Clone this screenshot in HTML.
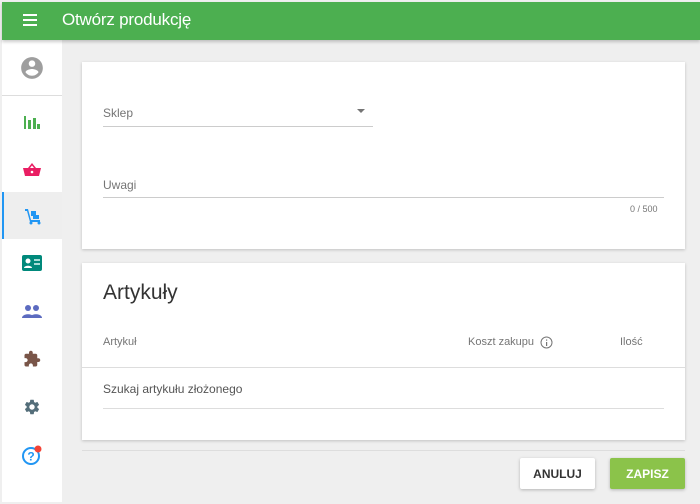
<!DOCTYPE html><html><head><style>
*{box-sizing:border-box;margin:0;padding:0}
body{width:700px;height:504px;background:#efefef;font-family:"Liberation Sans",sans-serif;position:relative;overflow:hidden}
.hdr{position:absolute;left:2px;top:2px;width:698px;height:38px;background:#4caf50;box-shadow:0 2px 3px rgba(0,0,0,.2);z-index:2}
.hdr .t{position:absolute;left:60px;top:8px;color:#fff;font-size:17px;letter-spacing:-0.2px}
.side{position:absolute;left:2px;top:40px;width:60px;height:462px;background:#fff}
.ic{position:absolute;left:0;width:60px;height:47px;display:flex;align-items:center;justify-content:center}
.card{position:absolute;left:82px;width:603px;background:#fff;box-shadow:0 1px 3px rgba(0,0,0,.2)}
.lbl{position:absolute;color:#757575;font-size:12px}
.line{position:absolute;height:1px;background:#ddd}
.btn{position:absolute;top:458px;height:31px;font-size:12px;font-weight:bold;display:flex;align-items:center;justify-content:center;box-shadow:0 1px 3px rgba(0,0,0,.25);border-radius:2px}
</style></head><body>
<div class="hdr"><svg style="position:absolute;left:21px;top:12px" width="14" height="12"><rect y="0" width="14" height="2" fill="#fff"/><rect y="5" width="14" height="2" fill="#fff"/><rect y="10" width="14" height="2" fill="#fff"/></svg><div class="t">Otwórz produkcję</div></div>
<div class="side">
<div class="ic" style="top:4px;height:48px"><svg width="26" height="26" viewBox="0 0 24 24"><path fill="#9e9e9e" d="M12 2C6.48 2 2 6.48 2 12s4.48 10 10 10 10-4.48 10-10S17.52 2 12 2zm0 3c1.66 0 3 1.340 3 3s-1.34 3-3 3-3-1.34-3-3 1.34-3 3-3zm0 14.2c-2.5 0-4.71-1.28-6-3.22.03-1.99 4-3.08 6-3.08 1.99 0 5.970 1.09 6 3.08-1.29 1.94-3.5 3.22-6 3.22z"/></svg></div>
<div style="position:absolute;left:0;top:55px;width:60px;height:1px;background:#ddd"></div>
<div class="ic" style="top:58px"><svg width="18" height="16"><g fill="#4caf50"><rect x="1" y="2" width="2" height="13"/><rect x="5" y="6" width="3" height="9"/><rect x="10" y="4" width="3" height="11"/><rect x="14" y="10" width="3" height="5"/></g></svg></div>
<div class="ic" style="top:105px"><svg width="18" height="16" viewBox="0 0 18 16"><path fill="#e91e63" d="M0 7h18l-2 8H2z M5 7l4-5 4 5h-2l-2-2.5L7 7z"/><circle cx="9" cy="11" r="1.3" fill="#fff"/></svg></div>
<div class="ic" style="top:152px;background:#eee;border-left:2px solid #2196f3"><svg width="18" height="18" viewBox="0 0 18 18"><g fill="#2196f3"><path d="M1 2h3l3 11h9v2H6L3 4H1z"/><rect x="7" y="4" width="5" height="5"/><rect x="9" y="8" width="6" height="4"/><circle cx="7" cy="16" r="1.5"/><circle cx="15" cy="16" r="1.5"/></g></svg></div>
<div class="ic" style="top:199px"><svg width="20" height="16"><rect width="20" height="16" rx="2" fill="#00897b"/><circle cx="6" cy="6" r="2.5" fill="#fff"/><path d="M2 13c0-3 8-3 8 0z" fill="#fff"/><rect x="12" y="4" width="6" height="2" fill="#a7dcd6"/><rect x="12" y="8" width="6" height="2" fill="#a7dcd6"/></svg></div>
<div class="ic" style="top:247px"><svg width="20" height="14"><g fill="#5c6bc0"><circle cx="6" cy="4" r="3"/><circle cx="14" cy="4" r="3"/><path d="M0 14c0-5 12-5 12 0z"/><path d="M8 14c0-5 12-5 12 0z"/></g></svg></div>
<div class="ic" style="top:295px"><svg width="18" height="18" viewBox="0 0 24 24"><path fill="#795548" d="M20.5 11H19V7c0-1.1-.9-2-2-2h-4V3.5C13 2.12 11.88 1 10.5 1S8 2.12 8 3.5V5H4c-1.1 0-2 .9-2 2v3.8h1.5c1.49 0 2.7 1.21 2.7 2.7s-1.21 2.7-2.7 2.7H2V20c0 1.1.9 2 2 2h3.8v-1.5c0-1.49 1.21-2.7 2.7-2.7 1.49 0 2.7 1.21 2.7 2.7V22H17c1.1 0 2-.9 2-2v-4h1.5c1.38 0 2.5-1.12 2.5-2.5S21.88 11 20.5 11z"/></svg></div>
<div class="ic" style="top:343px"><svg width="18" height="18" viewBox="0 0 24 24"><path fill="#546e7a" d="M19.14 12.94c.04-.3.06-.61.06-.94s-.02-.64-.07-.94l2.03-1.58a.49.49 0 00.12-.61l-1.92-3.32a.49.49 0 00-.59-.22l-2.39.96c-.5-.38-1.03-.7-1.62-.94l-.36-2.54a.48.48 0 00-.48-.41h-3.84c-.24 0-.43.17-.47.41l-.36 2.54c-.59.24-1.13.57-1.62.94l-2.39-.96a.49.49 0 00-.59.22L2.740 8.87c-.12.21-.08.47.12.61l2.03 1.58c-.05.3-.09.63-.09.94s.02.64.07.94l-2.03 1.58a.49.49 0 00-.12.61l1.92 3.32c.12.22.37.29.59.22l2.39-.96c.5.38 1.03.7 1.62.94l.36 2.54c.05.24.24.41.48.41h3.84c.24 0 .44-.17.47-.41l.36-2.54c.59-.24 1.13-.56 1.62-.94l2.39.96c.22.08.47 0 .59-.22l1.92-3.32c.12-.22.07-.47-.12-.61l-2.01-1.58zM12 15.6A3.6 3.6 0 1112 8.4a3.6 3.6 0 010 7.2z"/></svg></div>
<div class="ic" style="top:391px"><svg width="22" height="22" viewBox="0 0 22 22"><circle cx="10" cy="12" r="8" fill="none" stroke="#2196f3" stroke-width="2"/><text x="10" y="16.5" font-size="12" font-weight="bold" text-anchor="middle" fill="#2196f3" font-family="Liberation Sans">?</text><circle cx="17" cy="5" r="3.5" fill="#f44336"/></svg></div>
</div>
<div class="card" style="top:62px;height:187px">
<div class="lbl" style="left:21px;top:44px">Sklep</div>
<svg style="position:absolute;left:275px;top:47px" width="8" height="5"><path d="M0 0h8L4 4z" fill="#757575"/></svg>
<div class="line" style="left:21px;top:64px;width:270px;background:#ccc"></div>
<div class="lbl" style="left:21px;top:116px">Uwagi</div>
<div class="line" style="left:21px;top:135px;width:561px;background:#ccc"></div>
<div class="lbl" style="left:548px;top:142px;font-size:9px">0 / 500</div>
</div>
<div class="card" style="top:263px;height:177px">
<div style="position:absolute;left:21px;top:18px;font-size:21px;color:#333">Artykuły</div>
<div class="lbl" style="left:21px;top:73px;font-size:11px">Artykuł</div>
<div class="lbl" style="left:386px;top:73px;font-size:11px">Koszt zakupu</div>
<svg style="position:absolute;left:458px;top:73px" width="13" height="13"><circle cx="6.5" cy="6.5" r="5.5" fill="none" stroke="#757575"/><rect x="6" y="6" width="1.2" height="4" fill="#757575"/><rect x="6" y="3.5" width="1.2" height="1.2" fill="#757575"/></svg>
<div class="lbl" style="left:538px;top:73px;font-size:11px">Ilość</div>
<div class="line" style="left:0;top:104px;width:603px"></div>
<div class="lbl" style="left:21px;top:119px;color:#555">Szukaj artykułu złożonego</div>
<div class="line" style="left:21px;top:145px;width:561px"></div>
</div>
<div class="line" style="left:82px;top:450px;width:603px"></div>
<div class="btn" style="left:520px;width:75px;background:#fff;color:#333">ANULUJ</div>
<div class="btn" style="left:610px;width:75px;background:#8bc34a;color:#fff">ZAPISZ</div>
</body></html>
